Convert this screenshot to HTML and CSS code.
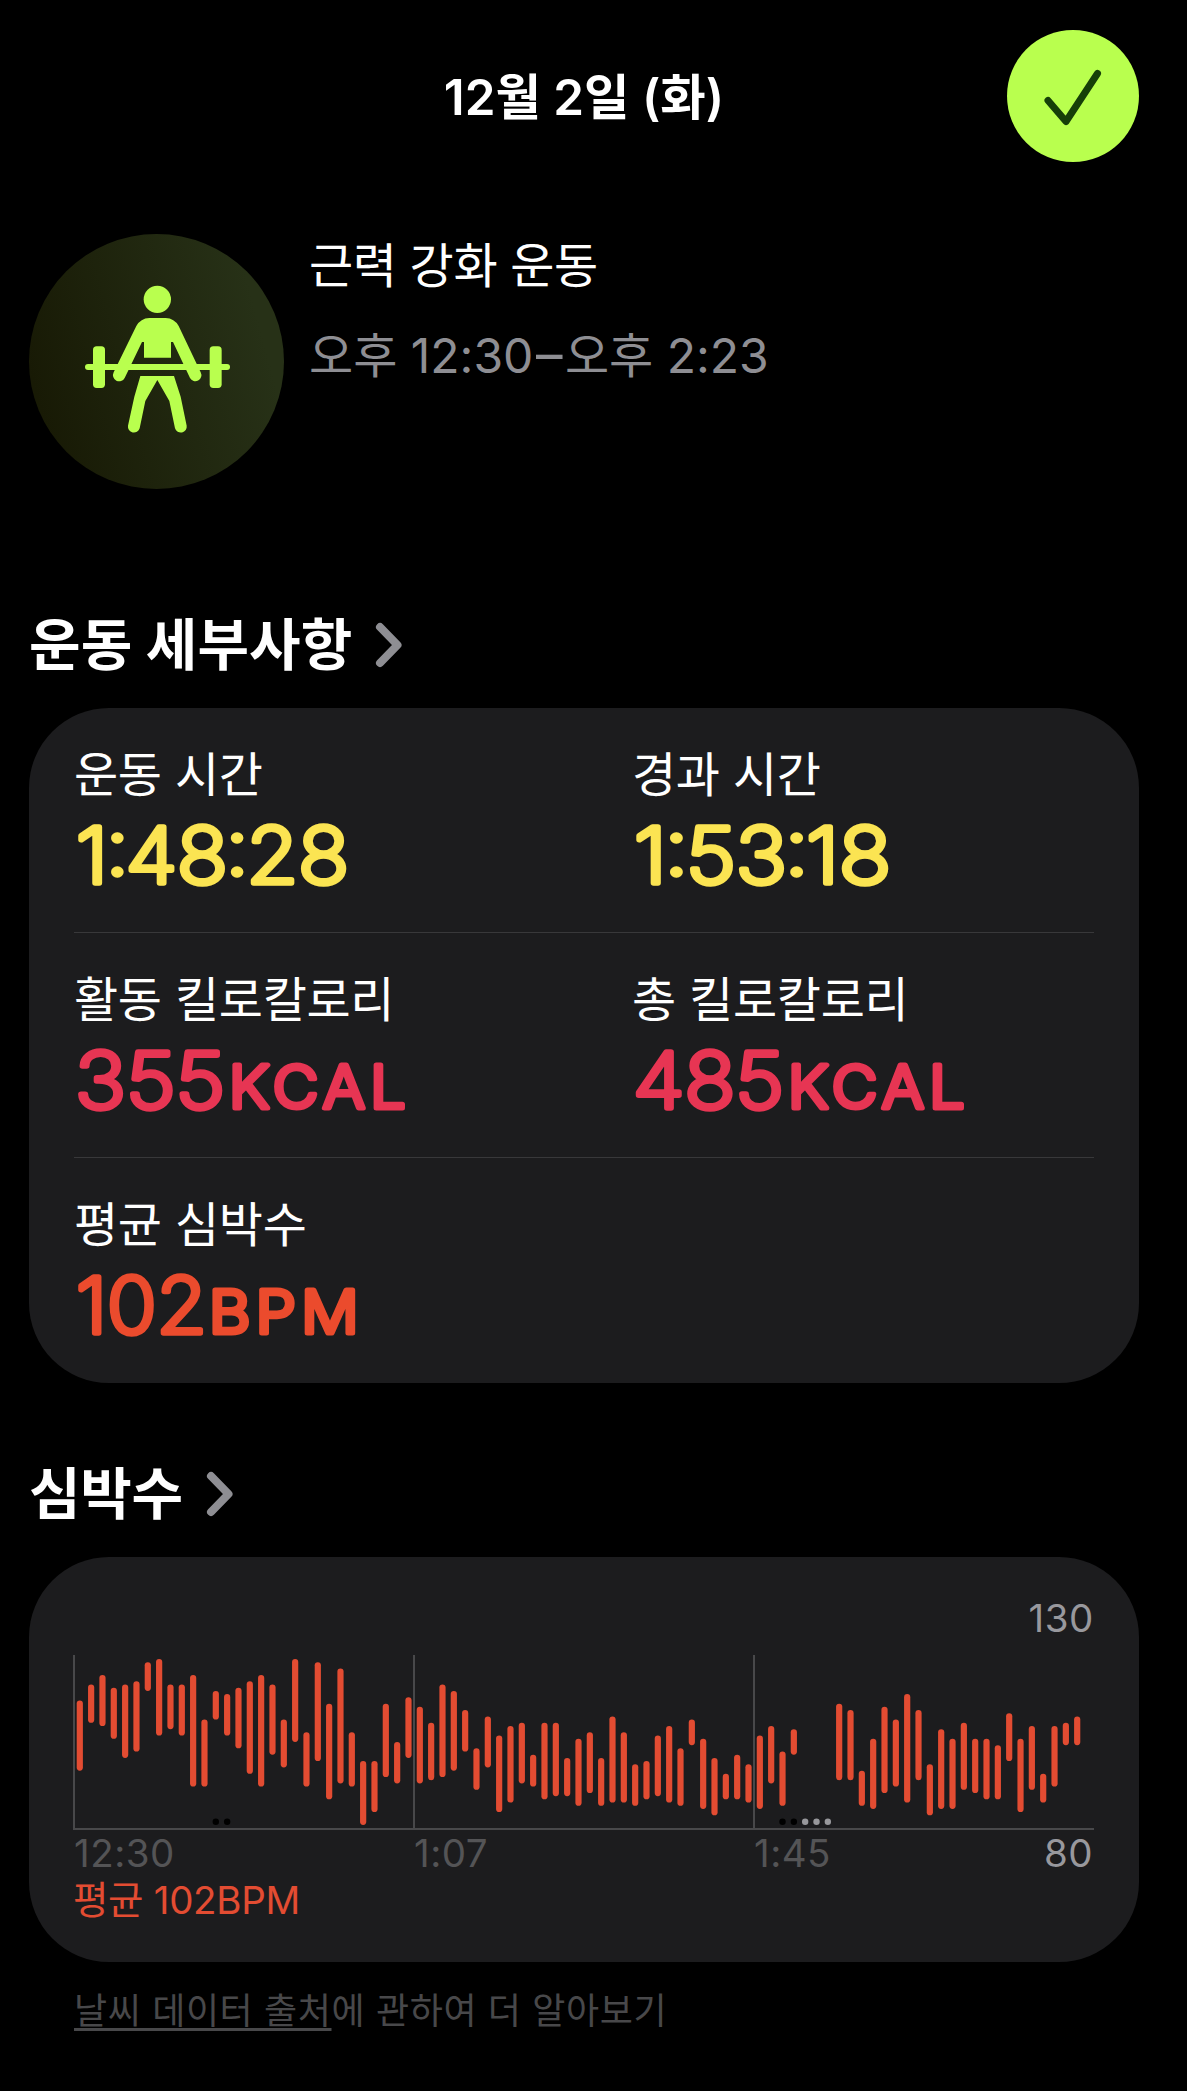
FILE: index.html
```html
<!DOCTYPE html>
<html lang="ko">
<head>
    <meta charset="UTF-8">
    <meta name="viewport" content="width=device-width, initial-scale=1.0">
    <title>12월 2일 (화)</title>
    <link rel="stylesheet" href="styles.css">
</head>
<body>
    <header class="header">
        <h1>12월 2일 (화)</h1>
        <button class="done-btn" aria-label="완료">
            <svg width="132" height="132" viewBox="0 0 132 132">
                <path d="M41 70.500 L59 91.500 L90.500 43.500" />
            </svg>
        </button>
    </header>

    <section class="workout">
        <div class="workout-icon">
            <svg width="255" height="255" viewBox="27 42 765 765">
                <circle cx="412" cy="238" r="41" />
                <path d="M388 294 H437 Q463 295 476 318 L542 457 A18 18 0 0 1 510 474 L459 366 H453 V413 H372 V366 H366 L314 474 A18 18 0 0 1 281 457 L349 318 Q362 295 388 294 Z" />
                <rect x="195" y="432" width="435" height="18" rx="9" />
                <rect x="219" y="379" width="36" height="125" rx="11" />
                <rect x="569" y="379" width="36" height="125" rx="11" />
                <path d="M361 468 H462 L482 530 L500 617 A18 18 0 0 1 465 625 L448 543 L412 480 L376 543 L359 625 A18 18 0 0 1 324 617 L343 530 Z" />
            </svg>
        </div>
        <div class="workout-info">
            <p class="workout-name">근력 강화 운동</p>
            <p class="workout-time">오후 12:30<span class="dash">–</span>오후 2:23</p>
        </div>
    </section>

    <h2 class="section-title details-title">운동 세부사항
        <svg class="chevron" width="26" height="44" viewBox="0 0 26 44"><path d="M4 4 L21.500 22 L4 40" /></svg>
    </h2>
    <section class="card details">
        <div class="row">
            <div class="metric">
                <p>운동 시간</p>
                <svg class="value time" width="440" height="100"><text x="2" y="77.500" dx="0 -2 -3 0 -2 -2" textLength="273" lengthAdjust="spacingAndGlyphs">1:48:28</text></svg>
            </div>
            <div class="metric">
                <p>경과 시간</p>
                <svg class="value time" width="440" height="100"><text x="2" y="77.500" dx="0 -2 -2 0 -2 -2" textLength="257" lengthAdjust="spacingAndGlyphs">1:53:18</text></svg>
            </div>
        </div>
        <div class="row">
            <div class="metric">
                <p>활동 킬로칼로리</p>
                <svg class="value energy" width="440" height="100"><text x="1" y="77.500" textLength="150" lengthAdjust="spacingAndGlyphs">355</text><text class="unit" x="155" y="77.500" textLength="182" lengthAdjust="spacingAndGlyphs">KCAL</text></svg>
            </div>
            <div class="metric">
                <p>총 킬로칼로리</p>
                <svg class="value energy" width="440" height="100"><text x="1" y="77.500" textLength="151" lengthAdjust="spacingAndGlyphs">485</text><text class="unit" x="156" y="77.500" textLength="182" lengthAdjust="spacingAndGlyphs">KCAL</text></svg>
            </div>
        </div>
        <div class="row">
            <div class="metric">
                <p>평균 심박수</p>
                <svg class="value heart" width="440" height="100"><text x="2" y="77.500" textLength="131" lengthAdjust="spacingAndGlyphs">102</text><text class="unit" x="135" y="77.500" textLength="155" lengthAdjust="spacingAndGlyphs">BPM</text></svg>
            </div>
        </div>
    </section>

    <h2 class="section-title heart-title">심박수
        <svg class="chevron" width="26" height="44" viewBox="0 0 26 44"><path d="M4 4 L21.500 22 L4 40" /></svg>
    </h2>
    <section class="card heart-rate">
        <div class="chart-max">130</div>
        <svg id="chart" width="1021" height="176" viewBox="0 0 1021 176"></svg>
        <div class="chart-axis">
            <span>12:30</span>
            <span>1:07</span>
            <span>1:45</span>
            <span class="chart-min">80</span>
        </div>
        <p class="chart-average">평균 102BPM</p>
    </section>

    <footer class="footer"><a class="source-link">날씨 데이터 출처</a>에 관하여 더 알아보기</footer>

    <script>
        // [highest, lowest] BPM of each time slot, null when nothing was recorded
        const ranges = [
            [119, 97], [124, 112], [127, 111], [123, 107], [124, 101], [125, 103], [131, 122], [132, 108], [124, 110], [124, 108],
            [127, 92], [113, 92], [122, 113], [121, 108], [123, 104], [125, 96], [127, 92], [124, 102], [113, 98], [132, 106],
            [109, 92], [131, 100], [118, 88], [129, 93], [109, 92], [100, 80], [100, 84], [118, 95], [106, 93], [120, 101],
            [117, 93], [112, 94], [124, 95], [122, 97], [116, 103], [104, 91], [114, 98], [108, 84], [111, 87], [112, 93],
            [102, 92], [112, 88], [112, 89], [101, 89], [107, 86], [109, 90], [101, 86], [114, 87], [109, 87], [99, 86],
            [100, 88], [108, 89], [111, 87], [104, 86], [113, 105], [107, 85], [101, 83], [96, 88], [102, 88], [99, 87],
            [108, 85], [111, 93], [103, 86], [110, 102], null, null, null, [118, 94], [116, 94], [97, 86],
            [107, 85], [117, 90], [113, 92], [121, 87], [116, 94], [99, 83], [110, 85], [107, 85], [112, 91], [107, 90],
            [107, 88], [105, 88], [115, 100], [107, 84], [111, 91], [96, 87], [111, 92], [112, 105], [114, 105]
        ];
        const dots = { 12: '#000', 13: '#000', 62: '#000', 63: '#000', 64: '#98989c', 65: '#98989c', 66: '#98989c' };

        const slotX = i => 6.8 + i * 11.334;
        const bpmY = bpm => 4 + (132 - bpm) * 3.19;

        function drawChart() {
            let svg = '';
            for (const x of [1, 341, 681]) {
                svg += `<path class="grid-line" d="M${x} 0 V174" />`;
            }
            svg += '<path class="grid-line" d="M0 174 H1021" />';
            ranges.forEach((range, i) => {
                if (!range) return;
                const top = bpmY(range[0]);
                const height = bpmY(range[1]) - top;
                svg += `<rect class="bar" x="${slotX(i) - 3.1}" y="${top}" width="6.2" height="${height}" rx="3.1" />`;
            });
            for (const [i, color] of Object.entries(dots)) {
                svg += `<circle cx="${slotX(Number(i))}" cy="166.7" r="3.2" fill="${color}" />`;
            }
            document.getElementById('chart').innerHTML = svg;
        }

        drawChart();
    </script>
</body>
</html>
```
FILE: styles.css
```css
* {
    box-sizing: border-box;
}
body {
    margin: 0;
    padding: 30px 48px 0 29px;
    background-color: #000;
    color: #fff;
    font-family: Inter, "Noto Sans CJK KR", sans-serif;
}
h1, h2, p {
    margin: 0;
}
svg {
    display: block;
    overflow: visible;
}
.header {
    display: grid;
    grid-template-columns: 132px 1fr 132px;
    align-items: center;
    height: 132px;
}
h1 {
    grid-column: 2;
    padding-top: 2px;
    font-size: 49.4px;
    font-weight: 600;
    line-height: 60px;
    text-align: center;
}
.done-btn {
    width: 132px;
    height: 132px;
    padding: 0;
    border: none;
    border-radius: 50%;
    background-color: #b9ff4e;
}
.done-btn path {
    fill: none;
    stroke: #163f08;
    stroke-width: 7;
    stroke-linecap: round;
    stroke-linejoin: round;
}
.workout {
    display: flex;
    gap: 25px;
    margin-top: 72px;
}
.workout-icon {
    width: 255px;
    height: 255px;
    border-radius: 50%;
    background: linear-gradient(75deg, #181a05 10%, #273117 85%);
    fill: #b9ff4e;
}
.workout-info {
    padding-top: 2px;
    font-size: 48px;
    line-height: 60px;
}
.workout-name {
    letter-spacing: -0.4px;
}
.workout-time {
    margin-top: 30px;
    color: #8e8e93;
}
.dash {
    margin: 0 2.5px;
    font-size: 53px;
    line-height: 0;
}
.section-title {
    display: flex;
    align-items: center;
    gap: 24px;
    height: 80px;
    padding-bottom: 2px;
    font-size: 56px;
    font-weight: 700;
    line-height: 70px;
}
.details-title {
    margin-top: 117px;
    letter-spacing: 0.15px;
}
.heart-title {
    margin-top: 72px;
    letter-spacing: -0.3px;
}
.chevron path {
    fill: none;
    stroke: #8e8e93;
    stroke-width: 8;
    stroke-linecap: round;
    stroke-linejoin: round;
}
.card {
    margin-top: 22px;
    padding: 0 45px;
    border-radius: 80px;
    background-color: #1c1c1e;
}
.row {
    display: grid;
    grid-template-columns: 558px 1fr;
    height: 225px;
    padding-top: 37px;
    border-bottom: 1px solid #38383a;
}
.row:last-child {
    border-bottom: none;
}
.metric p {
    font-size: 48px;
    line-height: 60px;
    letter-spacing: -0.3px;
}
.value {
    font-size: 77px;
    font-weight: 200;
    stroke-width: 5.5px;
    stroke-linejoin: round;
}
.value .unit {
    font-size: 59px;
    font-weight: 300;
    letter-spacing: 5px;
    stroke-width: 5px;
}
.time {
    fill: #fbe452;
    stroke: #fbe452;
}
.energy {
    fill: #e73553;
    stroke: #e73553;
}
.heart {
    fill: #eb4b2d;
    stroke: #eb4b2d;
}
.heart-rate {
    height: 405px;
    padding: 38px 45px 0 44px;
    font-size: 38.5px;
    line-height: 46px;
}
.chart-max {
    margin-bottom: 14px;
    color: #98989d;
    letter-spacing: 0.6px;
    text-align: right;
}
.grid-line {
    stroke: #48484a;
    stroke-width: 2;
}
.bar {
    fill: #e34c32;
}
.chart-axis {
    display: grid;
    grid-template-columns: 340px 340px 1fr auto;
    margin-top: -1px;
    padding: 0 1px;
    color: #545456;
    letter-spacing: 0.5px;
}
.chart-axis .chart-min {
    color: #98989d;
}
.chart-average {
    margin-top: 1px;
    color: #e34c32;
    letter-spacing: -0.3px;
}
.footer {
    margin-top: 26px;
    padding-left: 45px;
    color: #48484a;
    font-size: 36px;
    line-height: 46px;
    letter-spacing: 0.6px;
}
.source-link {
    text-decoration: underline;
    text-decoration-thickness: 3px;
    text-decoration-skip-ink: none;
    text-underline-offset: 4px;
}
```
